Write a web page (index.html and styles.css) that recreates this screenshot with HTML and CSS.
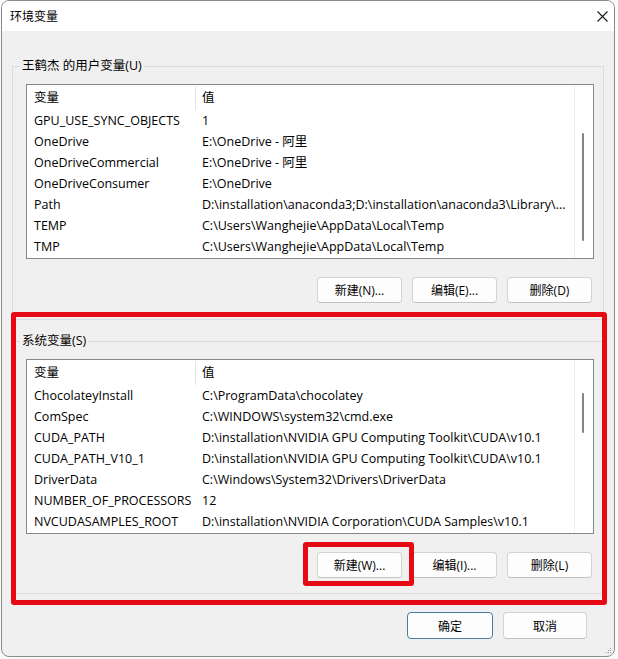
FILE: index.html
```html
<!DOCTYPE html>
<html lang="zh-CN">
<head>
    <meta charset="UTF-8">
    <title>环境变量</title>
    <link rel="stylesheet" href="styles.css">
</head>
<body>

<div class="window">
    <div class="titlebar">
        <span class="title">环境变量</span>
        <svg class="close" width="11" height="11" viewBox="0 0 11 11">
            <path d="M0.5 0.5 L10.5 10.5 M10.5 0.5 L0.5 10.5" stroke="#1a1a1a" stroke-width="1.1" fill="none"/>
        </svg>
    </div>

    <div class="content">
        <!-- user variables -->
        <fieldset class="group">
            <legend>王鹤杰 的用户变量(U)</legend>
            <div class="list">
                <div class="list-main">
                    <div class="row head"><span class="c1">变量</span><span class="c2">值</span></div>
                    <div class="row"><span class="c1">GPU_USE_SYNC_OBJECTS</span><span class="c2">1</span></div>
                    <div class="row"><span class="c1">OneDrive</span><span class="c2">E:\OneDrive - 阿里</span></div>
                    <div class="row"><span class="c1">OneDriveCommercial</span><span class="c2">E:\OneDrive - 阿里</span></div>
                    <div class="row"><span class="c1">OneDriveConsumer</span><span class="c2">E:\OneDrive</span></div>
                    <div class="row"><span class="c1">Path</span><span class="c2">D:\installation\anaconda3;D:\installation\anaconda3\Library\...</span></div>
                    <div class="row"><span class="c1">TEMP</span><span class="c2">C:\Users\Wanghejie\AppData\Local\Temp</span></div>
                    <div class="row"><span class="c1">TMP</span><span class="c2">C:\Users\Wanghejie\AppData\Local\Temp</span></div>
                </div>
                <div class="scroll"><div class="thumb thumb-user"></div></div>
            </div>
            <div class="actions">
                <button class="btn">新建(N)...</button>
                <button class="btn">编辑(E)...</button>
                <button class="btn">删除(D)</button>
            </div>
        </fieldset>

        <!-- system variables -->
        <fieldset class="group group-system">
            <legend>系统变量(S)</legend>
            <div class="list">
                <div class="list-main">
                    <div class="row head"><span class="c1">变量</span><span class="c2">值</span></div>
                    <div class="row"><span class="c1">ChocolateyInstall</span><span class="c2">C:\ProgramData\chocolatey</span></div>
                    <div class="row"><span class="c1">ComSpec</span><span class="c2">C:\WINDOWS\system32\cmd.exe</span></div>
                    <div class="row"><span class="c1">CUDA_PATH</span><span class="c2">D:\installation\NVIDIA GPU Computing Toolkit\CUDA\v10.1</span></div>
                    <div class="row"><span class="c1">CUDA_PATH_V10_1</span><span class="c2">D:\installation\NVIDIA GPU Computing Toolkit\CUDA\v10.1</span></div>
                    <div class="row"><span class="c1">DriverData</span><span class="c2">C:\Windows\System32\Drivers\DriverData</span></div>
                    <div class="row"><span class="c1">NUMBER_OF_PROCESSORS</span><span class="c2">12</span></div>
                    <div class="row"><span class="c1">NVCUDASAMPLES_ROOT</span><span class="c2">D:\installation\NVIDIA Corporation\CUDA Samples\v10.1</span></div>
                </div>
                <div class="scroll"><div class="thumb thumb-system"></div></div>
            </div>
            <div class="actions">
                <span class="mark-wrap">
                    <button class="btn">新建(W)...</button>
                    <span class="mark-btn"></span>
                </span>
                <button class="btn">编辑(I)...</button>
                <button class="btn">删除(L)</button>
            </div>
        </fieldset>

        <div class="footer">
            <button class="btn btn-default">确定</button>
            <button class="btn btn-cancel">取消</button>
        </div>
    </div>

    <!-- red highlight round the system group -->
    <div class="mark-group"></div>

    <svg class="grip" width="6" height="6" viewBox="0 0 6 6">
        <rect x="4" y="0" width="1" height="1" fill="#9a9a9a"/>
        <rect x="2" y="2" width="1" height="1" fill="#9a9a9a"/>
        <rect x="4" y="2" width="1" height="1" fill="#9a9a9a"/>
        <rect x="0" y="4" width="1" height="1" fill="#9a9a9a"/>
        <rect x="2" y="4" width="1" height="1" fill="#9a9a9a"/>
        <rect x="4" y="4" width="1" height="1" fill="#9a9a9a"/>
    </svg>
</div>

</body>
</html>
```

FILE: styles.css
```css
body {
    margin: 0;
    background-color: #fafafa;
    font-family: "Open Sans", "Noto Sans CJK SC", sans-serif;
    font-size: 12px;
    color: #000;
}
.window {
    position: relative;
    box-sizing: border-box;
    width: 614px;
    height: 657px;
    margin-left: 1px;
    border: 1px solid #8c8c8c;
    border-radius: 8px;
    background-color: #f0f0f0;
    overflow: hidden;
}
.titlebar {
    display: flex;
    align-items: center;
    justify-content: space-between;
    height: 30px;
    padding: 0 6px 0 8px;
    background-color: #fff;
}
.title {
    font-size: 12px;
}
.close {
    display: block;
}
.content {
    padding-top: 27px;
}
.group {
    margin: 0 10px;
    padding: 10px 9px 16px 13px;
    border: 1px solid #dcdcdc;
    min-width: 0;
}
.group legend {
    margin-left: -6px;
    padding: 0 2px;
    line-height: 16px;
    font-size: 12.5px;
}
.group-system {
    margin-top: 13px;
    padding-bottom: 15px;
}
.list {
    display: flex;
    box-sizing: border-box;
    height: 175px;
    border: 1px solid #828790;
    background-color: #fff;
    overflow: hidden;
}
.list-main {
    flex: 1;
    min-width: 0;
    padding-top: 1px;
    font-size: 12.5px;
}
.row {
    display: flex;
    height: 21px;
    line-height: 22px;
    white-space: nowrap;
}
.row.head {
    height: 24px;
    line-height: 24px;
}
.c1 {
    box-sizing: border-box;
    flex: 0 0 169px;
    padding-left: 7px;
    overflow: hidden;
}
.c2 {
    flex: 1;
    min-width: 0;
    padding-left: 6px;
    overflow: hidden;
    text-overflow: ellipsis;
}
.row.head .c1 {
    border-right: 1px solid #e5e5e5;
}
.scroll {
    flex: 0 0 18px;
    border-left: 1px solid #ededed;
}
.thumb {
    width: 2px;
    margin-left: 7px;
    background-color: #858585;
    border-radius: 1px;
}
.thumb-user {
    margin-top: 48px;
    height: 108px;
}
.thumb-system {
    margin-top: 33px;
    height: 40px;
}
.actions {
    display: flex;
    justify-content: flex-end;
    gap: 10px;
    margin-top: 18px;
    padding-right: 2px;
}
.btn {
    box-sizing: border-box;
    width: 85px;
    height: 26px;
    padding: 0;
    border: 1px solid #d3d3d3;
    border-bottom-color: #c2c2c2;
    border-radius: 4px;
    background-color: #fdfdfd;
    font-family: "Open Sans", "Noto Sans CJK SC", sans-serif;
    font-size: 12px;
    color: #000;
}
.footer {
    display: flex;
    justify-content: flex-end;
    gap: 10px;
    padding: 18px 27px 0 0;
}
.btn-default {
    width: 86px;
    height: 27px;
    border-color: #4a7c9c;
}
.btn-cancel {
    width: 84px;
    height: 27px;
}
.mark-wrap {
    position: relative;
    display: flex;
}
.mark-btn {
    position: absolute;
    left: -14px;
    top: -10px;
    right: -12px;
    bottom: -8px;
    border: 5px solid #e50a14;
    border-radius: 3px;
}
.mark-group {
    position: absolute;
    left: 9px;
    top: 311px;
    width: 596px;
    height: 293px;
    box-sizing: border-box;
    border: 5px solid #e50a14;
    border-radius: 3px;
}
.grip {
    position: absolute;
    right: 2px;
    bottom: 2px;
}
```
